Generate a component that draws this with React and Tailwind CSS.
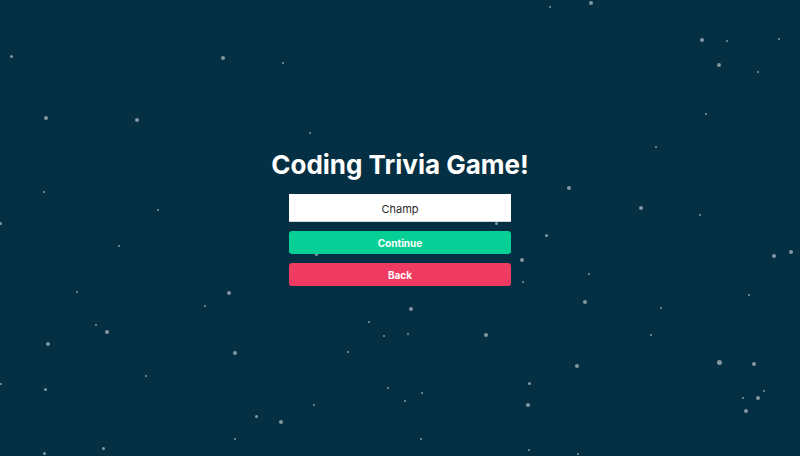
import { useState } from 'react'

// x, y, size — star field behind the menu
const STARS = [
  [11,56,3],[223,58,4],[283,63,1.5],[46,118,3.5],[137,120,3.5],[310,133,1.5],
  [44,192,2.5],[158,210,1.5],[0,223,3],
  [550,7,1.5],[591,3,4],[702,40,3.5],[727,41,1.5],[779,39,1.5],[719,65,4],
  [758,72,2],[706,114,2.5],[656,147,2.5],[569,188,4],[641,208,3.5],[700,215,2],[496,223,3],
  [119,246,2.5],[316,254,3],[77,292,2.5],[229,293,3.5],[205,306,2.5],[96,325,1.5],
  [107,332,3.5],[48,344,3.5],[235,353,4],[369,322,2.5],[384,336,1.5],[348,352,1.5],
  [146,376,2.5],[1,384,2],[45,389,3],[388,388,2.5],[314,405,2],[256,416,3],
  [281,422,3.5],[235,439,1.5],[103,448,3],[44,453,3],
  [546,235,3],[774,256,4],[791,252,4],[522,260,4],[589,274,1.5],[523,282,2.5],
  [749,295,2],[585,302,4],[661,308,1.5],[411,309,3.5],[408,334,2.5],[486,335,3.5],
  [651,335,2.5],[577,366,3.5],[719,362,5],[754,364,4.5],[529,383,3],[422,393,2.5],
  [405,401,2.5],[528,405,3.5],[764,391,1.5],[743,398,2.5],[758,398,4],[746,411,4],
  [421,439,1.5],[529,450,2.5],[578,454,1.5],
]

export default function App() {
  const [name, setName] = useState('Champ')

  return (
    <div className="relative h-[456px] w-full overflow-hidden bg-[#052f42] font-['Inter',sans-serif]">
      {STARS.map(([x, y, s], i) => (
        <span key={i}
              className="absolute rounded-full bg-white/50"
              style={{ left: x - s / 2, top: y - s / 2, width: s, height: s }}/>
      ))}

      <div className="relative flex flex-col items-center pt-[149px]">
        <h1 className="text-[26px] leading-[32px] font-bold text-white whitespace-nowrap">
          Coding Trivia Game!
        </h1>
        <div className="w-[222px] mt-[13px] flex flex-col gap-[9px]">
          <input value={name} onChange={e => setName(e.target.value)}
                 className="h-[28px] w-full bg-white border-b border-gray-300 pt-[2px] text-center
                            text-[11px] text-[#2a2a2a] outline-none"/>
          <button className="h-[23px] rounded-[3px] bg-[#06d096] pt-px text-white text-[10px] font-bold">
            Continue
          </button>
          <button className="h-[23px] rounded-[3px] bg-[#ef3b62] pt-px text-white text-[10px] font-bold">
            Back
          </button>
        </div>
      </div>
    </div>
  )
}
